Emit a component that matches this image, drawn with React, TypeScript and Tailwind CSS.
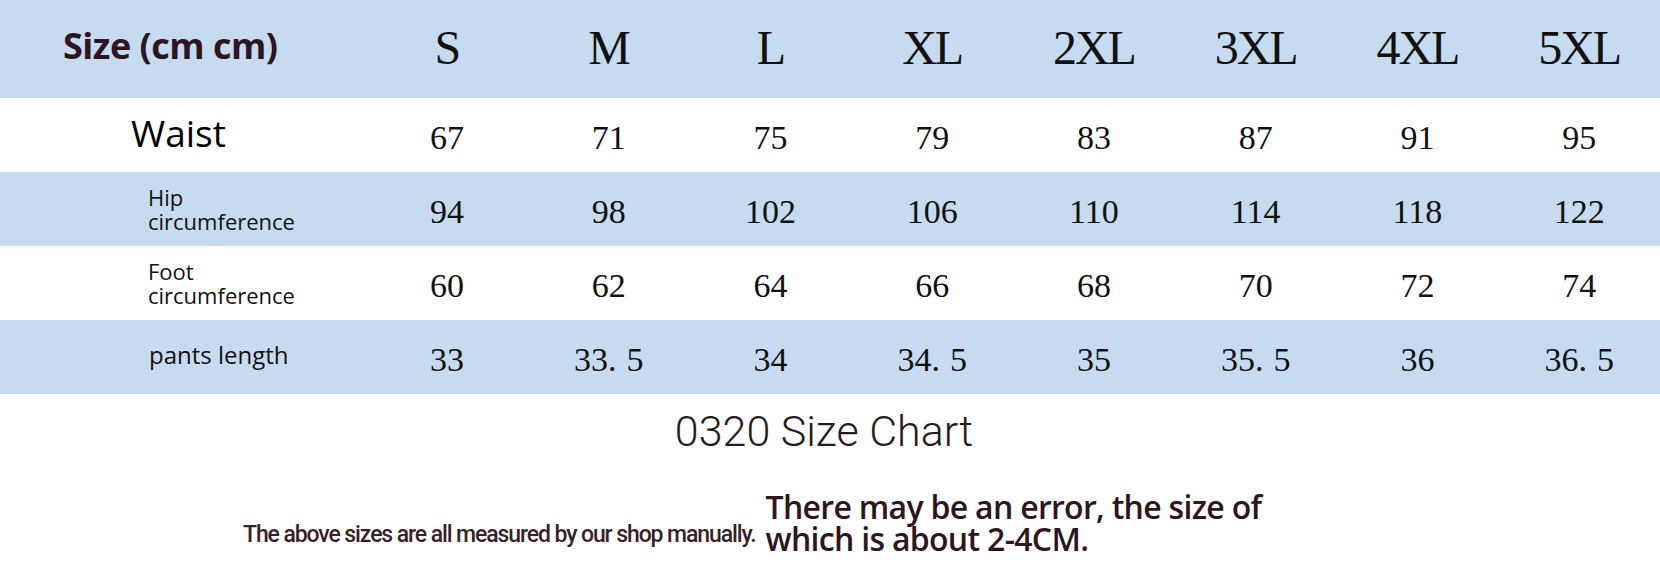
const sizes = ['S', 'M', 'L', 'XL', '2XL', '3XL', '4XL', '5XL'];

const rows = [
  { label: 'Waist', values: ['67', '71', '75', '79', '83', '87', '91', '95'], bg: 'bg-white' },
  { label: 'Hip\ncircumference', values: ['94', '98', '102', '106', '110', '114', '118', '122'], bg: 'bg-[#c6dbef]' },
  { label: 'Foot\ncircumference', values: ['60', '62', '64', '66', '68', '70', '72', '74'], bg: 'bg-white' },
  { label: 'pants length', values: ['33', '33.5', '34', '34.5', '35', '35.5', '36', '36.5'], bg: 'bg-[#c6dbef]' },
];

function Num({ v }: { v: string }) {
  const [a, b] = v.split('.');
  if (b === undefined) return <>{v}</>;
  return (
    <>
      {a}
      <span className="mr-[10px]">.</span>
      {b}
    </>
  );
}

function RowLabel({ label }: { label: string }) {
  if (label === 'Waist') {
    return <div className="pl-[131px] pb-[6px] text-[37px] leading-none text-black">Waist</div>;
  }
  if (label.includes('\n')) {
    const [l1, l2] = label.split('\n');
    return (
      <div className="pl-[148px] text-[22px] leading-[24px] text-[#111]">
        <div>{l1}</div>
        <div>{l2}</div>
      </div>
    );
  }
  return <div className="pl-[149px] pb-[4px] text-[24px] leading-none text-[#111]">{label}</div>;
}

export default function App() {
  return (
    <div className="w-[1660px] h-[565px] bg-white overflow-hidden font-['Open_Sans',Arial,sans-serif]">
      <div className="grid grid-cols-[366px_repeat(8,1fr)] h-[98px] bg-[#c6dbef] items-center">
        <div className="pl-[63px] pb-[6px] font-['Open_Sans',sans-serif] font-bold text-[36px] tracking-[-0.5px] text-[#2d1522]">
          Size (cm cm)
        </div>
        {sizes.map((s) => (
          <div key={s} className="text-center font-['Liberation_Serif',serif] text-[48px] tracking-[-2px] text-[#111] pb-[2px]">
            {s}
          </div>
        ))}
      </div>
      {rows.map((r) => (
        <div key={r.label} className={`grid grid-cols-[366px_repeat(8,1fr)] h-[74px] items-center ${r.bg}`}>
          <RowLabel label={r.label} />
          {r.values.map((v, i) => (
            <div key={i} className="text-center font-['Liberation_Serif',serif] text-[34px] text-[#111] pt-[4px]">
              <Num v={v} />
            </div>
          ))}
        </div>
      ))}
      <div className="flex justify-center pt-[16px] pr-[12px]">
        <div className="font-['Roboto',sans-serif] font-light text-[43px] text-[#2a1a20] leading-none">0320 Size Chart</div>
      </div>
      <div className="flex items-end pl-[243px] mt-[38px]">
        <div className="font-['Roboto',sans-serif] font-medium text-[23px] tracking-[-1.1px] text-[#3a1f2a] pb-[3px]">
          The above sizes are all measured by our shop manually.
        </div>
        <div className="ml-[10px] font-['Open_Sans',sans-serif] font-semibold text-[32px] leading-[32px] tracking-[-0.7px] text-[#2d1522]">
          There may be an error, the size of
          <br />
          which is about 2-4CM.
        </div>
      </div>
    </div>
  );
}
